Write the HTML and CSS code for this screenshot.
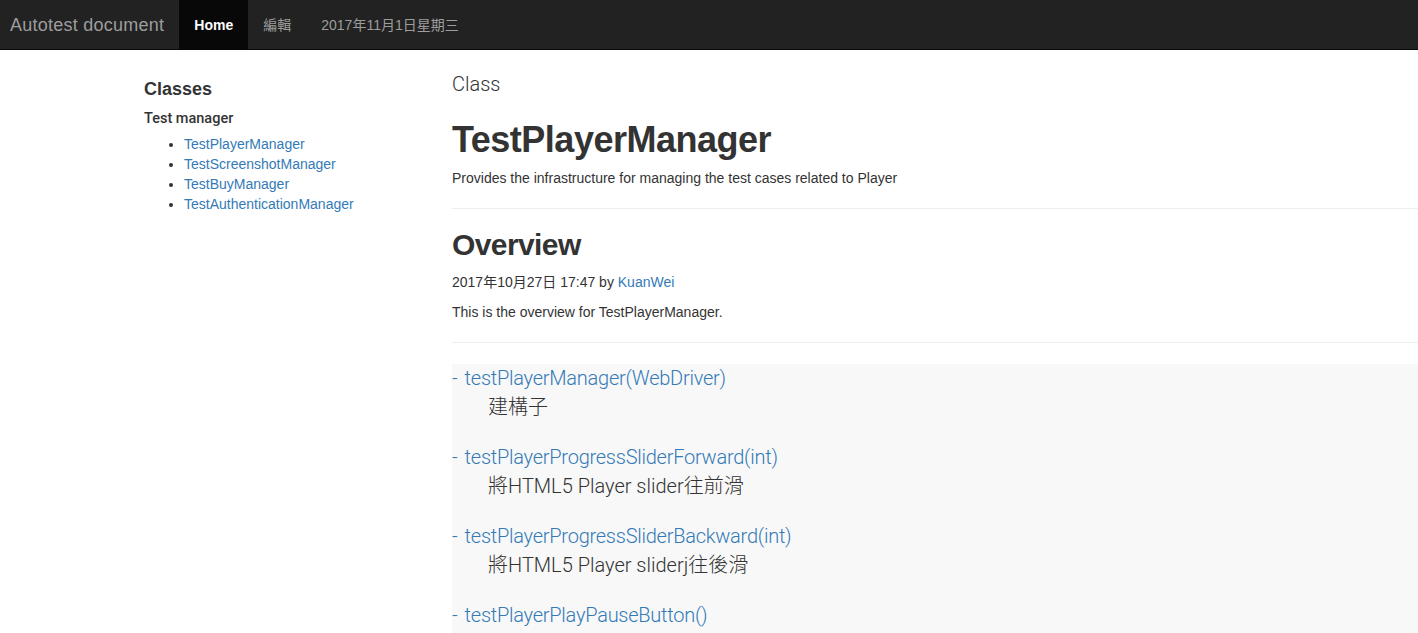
FILE: index.html
```html
<!DOCTYPE html>
<html lang="zh-Hant">
<head>
<meta charset="utf-8">
<title>Autotest document</title>
<link rel="stylesheet" href="styles.css">
</head>
<body>
<nav class="navbar">
  <a class="brand" href="#">Autotest document</a>
  <ul class="nav">
    <li class="active"><a href="#">Home</a></li>
    <li><a href="#">編輯</a></li>
    <li><a href="#">2017年11月1日星期三</a></li>
  </ul>
</nav>
<div class="page">
  <aside class="sidebar">
    <h4 class="side-title">Classes</h4>
    <div class="side-group">Test manager</div>
    <ul class="side-list">
      <li><a href="#">TestPlayerManager</a></li>
      <li><a href="#">TestScreenshotManager</a></li>
      <li><a href="#">TestBuyManager</a></li>
      <li><a href="#">TestAuthenticationManager</a></li>
    </ul>
  </aside>
  <main class="main">
    <div class="kind">Class</div>
    <h1 class="title">TestPlayerManager</h1>
    <p class="desc">Provides the infrastructure for managing the test cases related to Player</p>
    <hr class="rule">
    <h2 class="section">Overview</h2>
    <p class="meta">2017年10月27日 17:47 by <a href="#">KuanWei</a></p>
    <p class="overview">This is the overview for TestPlayerManager.</p>
    <hr class="rule rule-2">
    <div class="methods">
      <div class="method">
        <div class="method-name">- <a href="#">testPlayerManager(WebDriver)</a></div>
        <div class="method-desc">建構子</div>
      </div>
      <div class="method">
        <div class="method-name">- <a href="#">testPlayerProgressSliderForward(int)</a></div>
        <div class="method-desc">將HTML5 Player slider往前滑</div>
      </div>
      <div class="method">
        <div class="method-name">- <a href="#">testPlayerProgressSliderBackward(int)</a></div>
        <div class="method-desc">將HTML5 Player sliderj往後滑</div>
      </div>
      <div class="method">
        <div class="method-name">- <a href="#">testPlayerPlayPauseButton()</a></div>
      </div>
    </div>
  </main>
</div>
</body>
</html>
```
FILE: styles.css
```css
* { box-sizing: border-box; }
html, body { margin: 0; padding: 0; }
body {
  font-family: "Liberation Sans", Arial, "Noto Sans CJK TC", sans-serif;
  font-size: 14px;
  line-height: 20px;
  color: #333;
  background: #fff;
  overflow: hidden;
}
a { color: #337ab7; text-decoration: none; }

.navbar {
  height: 50px;
  background: #222;
  border-bottom: 1px solid #080808;
  display: flex;
  align-items: stretch;
}
.brand {
  display: flex;
  align-items: center;
  padding: 0 15px 0 10px;
  font-size: 18px;
  letter-spacing: 0.25px;
  color: #9d9d9d;
}
.nav {
  list-style: none;
  margin: 0;
  padding: 0;
  display: flex;
}
.nav li { display: flex; }
.nav li a {
  display: flex;
  align-items: center;
  padding: 0 15px;
  color: #9d9d9d;
  font-size: 14px;
}
.nav li.active a {
  background: #080808;
  color: #fff;
  font-weight: bold;
}

.page {
  display: flex;
  align-items: flex-start;
}
.sidebar {
  width: 452px;
  flex: 0 0 452px;
  padding-left: 144px;
  padding-top: 29px;
}
.side-title {
  margin: 0;
  font-size: 18px;
  line-height: 20px;
  font-weight: bold;
}
.side-group {
  margin-top: 10px;
  font-family: Roboto, "Liberation Sans", sans-serif;
  font-weight: 500;
  font-size: 14.5px;
}
.side-list {
  margin: 5px 0 0;
  padding-left: 40px;
}
.side-list li { line-height: 20px; }

.main {
  flex: 1;
  padding-top: 22px;
}
.kind {
  font-family: Roboto, "Liberation Sans", sans-serif;
  font-size: 20px;
  line-height: 24px;
  font-weight: 300;
  color: #333;
}
.title {
  margin: 24px 0 0;
  font-size: 36px;
  line-height: 40px;
  font-weight: bold;
  letter-spacing: -0.5px;
}
.desc { margin: 8px 0 0; }
.rule {
  margin: 20px 0 0;
  border: 0;
  border-top: 1px solid #eee;
  height: 0;
}
.section {
  margin: 19px 0 0;
  font-size: 30px;
  line-height: 34px;
  font-weight: bold;
  letter-spacing: -0.6px;
}
.meta { margin: 10px 0 0; }
.overview { margin: 10px 0 0; }
.rule-2 { margin-top: 20px; }

.methods {
  margin-top: 21px;
  background: #f8f8f8;
  padding-top: 2px;
  padding-bottom: 60px;
}
.method { margin-bottom: 26px; }
.method-name {
  font-family: Roboto, "Liberation Sans", "Noto Sans CJK TC", sans-serif;
  font-weight: 300;
  font-size: 20px;
  line-height: 24px;
  color: #337ab7;
}
.method-name a {
  margin-left: 2px;
  letter-spacing: -0.25px;
}
.method-desc {
  margin-top: 5px;
  padding-left: 36px;
  font-family: Roboto, "Liberation Sans", "Noto Sans CJK TC", sans-serif;
  font-weight: 300;
  font-size: 20px;
  line-height: 24px;
  color: #333;
}
```
